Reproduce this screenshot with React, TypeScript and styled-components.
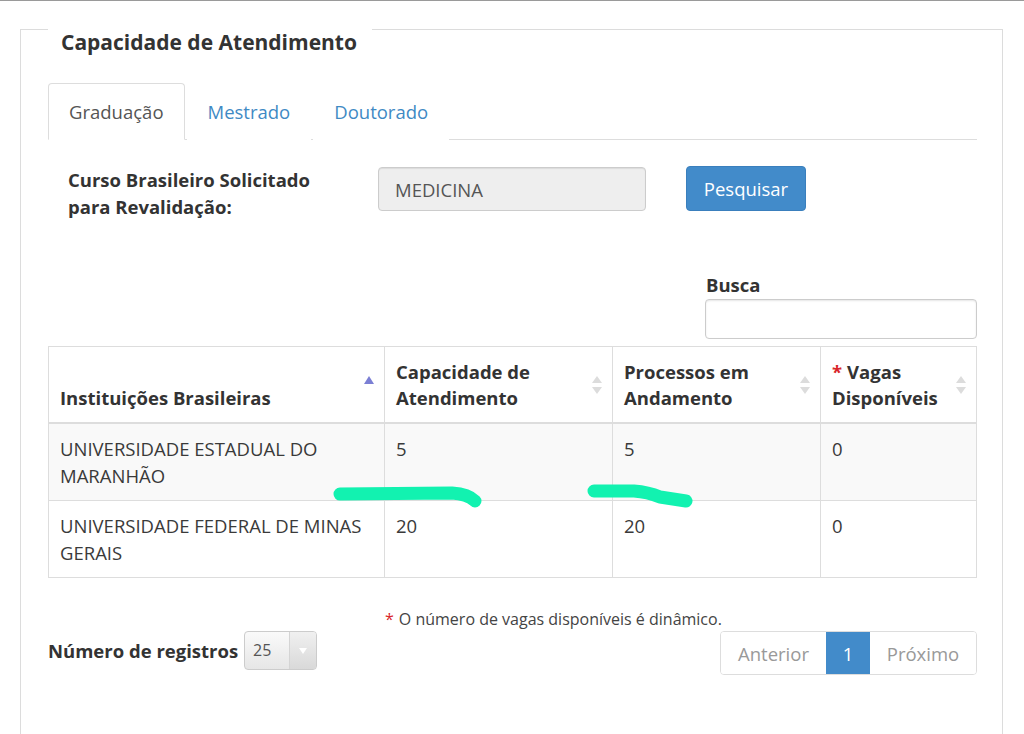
import React from "react";
import styled, { createGlobalStyle } from "styled-components";

const Global = createGlobalStyle`
  html, body { margin: 0; padding: 0; background: #fff; }
  body { font-family: "Open Sans", "Noto Sans", Arial, sans-serif; color: #333; font-size: 18.5px; line-height: 27px; }
  * { box-sizing: border-box; }
`;

const Page = styled.div`
  position: relative;
  width: 1024px;
  height: 734px;
  overflow: hidden;
  border-top: 1px solid #9a9a9a;
  padding-left: 20px;
`;

const Fieldset = styled.fieldset`
  margin: 0;
  width: 983px;
  min-height: 760px;
  border: 1px solid #dcdcdc;
  padding: 0 25px 40px 27px;
`;

const Legend = styled.legend`
  padding: 26px 15px 0 13px;
  font-size: 21px;
  line-height: 30px;
  font-weight: 700;
  color: #333;
`;

const Tabs = styled.ul`
  list-style: none;
  display: flex;
  margin: 26px 0 0 0;
  padding: 0;
  border-bottom: 1px solid #ddd;
`;

const Tab = styled.li<{ $active?: boolean }>`
  margin: 0 2px -1px 0;
  padding: 14px 20px;
  line-height: 27px;
  font-size: 18.5px;
  border: 1px solid ${(p) => (p.$active ? "#ddd" : "transparent")};
  border-bottom-color: ${(p) => (p.$active ? "#fff" : "transparent")};
  border-radius: 4px 4px 0 0;
  background: #fff;
  color: ${(p) => (p.$active ? "#555" : "#3f8ac4")};
`;

const FormRow = styled.div`
  display: grid;
  grid-template-columns: 270px 268px 120px;
  column-gap: 40px;
  align-items: start;
  margin-top: 26px;
  padding-left: 20px;
`;

const Label = styled.label`
  font-weight: 700;
  font-size: 18.5px;
  line-height: 27px;
  color: #333;
`;

const ReadonlyInput = styled.div`
  margin-top: 1px;
  height: 44px;
  border: 1px solid #ccc;
  border-radius: 4px;
  background: #eee;
  box-shadow: inset 0 1px 1px rgba(0, 0, 0, 0.08);
  padding: 0 16px;
  display: flex;
  align-items: center;
  color: #555;
  font-size: 18.5px;
`;

const Button = styled.button`
  height: 45px;
  border: 1px solid #3a7fbd;
  border-radius: 4px;
  background: #428bca;
  color: #fff;
  font-family: inherit;
  font-size: 18.5px;
  padding: 0;
`;

const SearchBlock = styled.div`
  display: flex;
  justify-content: flex-end;
  margin-top: 51px;
`;

const SearchInner = styled.div`
  width: 272px;
  display: flex;
  flex-direction: column;
`;

const SearchLabel = styled.label`
  font-weight: 700;
  line-height: 27px;
  padding-left: 1px;
`;

const SearchInput = styled.input`
  height: 40px;
  margin-top: 1px;
  border: 1px solid #ccc;
  border-radius: 4px;
  box-shadow: inset 0 1px 2px rgba(0, 0, 0, 0.1);
  font-family: inherit;
  font-size: 18px;
`;

const Table = styled.table`
  width: 928px;
  margin-top: 7px;
  border-collapse: collapse;
  table-layout: fixed;
  border: 1px solid #ddd;
`;

const Th = styled.th<{ $w: number }>`
  position: relative;
  width: ${(p) => p.$w}px;
  padding: 12px 34px 11px 11px;
  text-align: left;
  vertical-align: bottom;
  font-weight: 700;
  font-size: 18.5px;
  line-height: 26px;
  border: 1px solid #ddd;
  border-bottom: 2px solid #ddd;
  color: #333;
`;

const SortIcon = styled.svg`
  position: absolute;
  right: 9px;
  top: 50%;
  transform: translateY(-50%);
`;

const Star = styled.span`
  color: #d9262a;
  margin-right: 5px;
`;

const Tr = styled.tr<{ $striped?: boolean }>`
  background: ${(p) => (p.$striped ? "#f9f9f9" : "#fff")};
`;

const Td = styled.td`
  padding: 11px 11px 11px;
  vertical-align: top;
  border: 1px solid #ddd;
  font-size: 18.5px;
  line-height: 27px;
  color: #3a3a3a;
`;

const Footnote = styled.div`
  margin-top: 28px;
  padding-left: 337px;
  font-size: 16px;
  line-height: 26px;
  color: #444;
`;

const BottomRow = styled.div`
  display: flex;
  justify-content: space-between;
  align-items: flex-start;
  margin-top: -1px;
`;

const LengthControl = styled.div`
  display: flex;
  align-items: center;
  gap: 6px;
  height: 39px;
  font-weight: 700;
  font-size: 18.5px;
`;

const Select = styled.div`
  width: 73px;
  height: 39px;
  border: 1px solid #ccc;
  border-radius: 4px;
  display: flex;
  background: linear-gradient(#fafafa, #e6e6e6);
  overflow: hidden;
`;

const SelectValue = styled.span`
  flex: 1;
  display: flex;
  align-items: center;
  padding-left: 8px;
  font-weight: 400;
  font-size: 16px;
  color: #555;
`;

const SelectArrow = styled.span`
  width: 27px;
  border-left: 1px solid #d4d4d4;
  display: flex;
  align-items: center;
  justify-content: center;
  background: linear-gradient(#f0f0f0, #d9d9d9);
`;

const Pager = styled.div`
  display: flex;
  height: 44px;
  border: 1px solid #ddd;
  border-radius: 4px;
  overflow: hidden;
`;

const PageItem = styled.span<{ $active?: boolean; $w: number }>`
  width: ${(p) => p.$w}px;
  display: flex;
  align-items: center;
  justify-content: center;
  font-size: 18.5px;
  background: ${(p) => (p.$active ? "#428bca" : "#fff")};
  color: ${(p) => (p.$active ? "#fff" : "#999")};
`;

const Marker = styled.svg`
  position: absolute;
  left: 0;
  top: 0;
  pointer-events: none;
`;

const SortBoth = () => (
  <SortIcon width="12" height="22" viewBox="0 0 12 22">
    <path d="M6 2 L11 9 L1 9 Z" fill="#dcdcdc" />
    <path d="M6 20 L11 13 L1 13 Z" fill="#dcdcdc" />
  </SortIcon>
);

const SortAsc = () => (
  <SortIcon width="12" height="22" viewBox="0 0 12 22" style={{ marginTop: -4 }}>
    <path d="M6 6 L11 14 L1 14 Z" fill="#7b7fd4" />
  </SortIcon>
);

export default function App() {
  return (
    <>
      <Global />
      <Page>
        <Fieldset>
          <Legend>Capacidade de Atendimento</Legend>
          <Tabs>
            <Tab $active>Graduação</Tab>
            <Tab>Mestrado</Tab>
            <Tab>Doutorado</Tab>
          </Tabs>
          <FormRow>
            <Label>
              Curso Brasileiro Solicitado
              <br />
              para Revalidação:
            </Label>
            <ReadonlyInput>MEDICINA</ReadonlyInput>
            <Button>Pesquisar</Button>
          </FormRow>
          <SearchBlock>
            <SearchInner>
              <SearchLabel>Busca</SearchLabel>
              <SearchInput type="text" />
            </SearchInner>
          </SearchBlock>
          <Table>
            <thead>
              <tr>
                <Th $w={336}>
                  Instituições Brasileiras
                  <SortAsc />
                </Th>
                <Th $w={228}>
                  Capacidade de Atendimento
                  <SortBoth />
                </Th>
                <Th $w={208}>
                  Processos em Andamento
                  <SortBoth />
                </Th>
                <Th $w={156}>
                  <Star>*</Star>Vagas Disponíveis
                  <SortBoth />
                </Th>
              </tr>
            </thead>
            <tbody>
              <Tr $striped>
                <Td>UNIVERSIDADE ESTADUAL DO MARANHÃO</Td>
                <Td>5</Td>
                <Td>5</Td>
                <Td>0</Td>
              </Tr>
              <Tr>
                <Td>UNIVERSIDADE FEDERAL DE MINAS GERAIS</Td>
                <Td>20</Td>
                <Td>20</Td>
                <Td>0</Td>
              </Tr>
            </tbody>
          </Table>
          <Footnote>
            <Star>*</Star>O número de vagas disponíveis é dinâmico.
          </Footnote>
          <BottomRow>
            <LengthControl>
              Número de registros
              <Select>
                <SelectValue>25</SelectValue>
                <SelectArrow>
                  <svg width="10" height="8" viewBox="0 0 10 8">
                    <path d="M1 1 L9 1 L5 7 Z" fill="#fff" />
                  </svg>
                </SelectArrow>
              </Select>
            </LengthControl>
            <Pager>
              <PageItem $w={105}>Anterior</PageItem>
              <PageItem $w={44} $active>
                1
              </PageItem>
              <PageItem $w={106}>Próximo</PageItem>
            </Pager>
          </BottomRow>
        </Fieldset>
        <Marker width="1024" height="734" viewBox="0 0 1024 734">
          <path
            d="M340 493 L452 492 Q468 493 475 500"
            stroke="#12f2b0"
            strokeWidth="13"
            strokeLinecap="round"
            strokeLinejoin="round"
            fill="none"
          />
          <path
            d="M594 490 L634 490 Q648 491 660 496 L686 500"
            stroke="#12f2b0"
            strokeWidth="13"
            strokeLinecap="round"
            strokeLinejoin="round"
            fill="none"
          />
        </Marker>
      </Page>
    </>
  );
}
